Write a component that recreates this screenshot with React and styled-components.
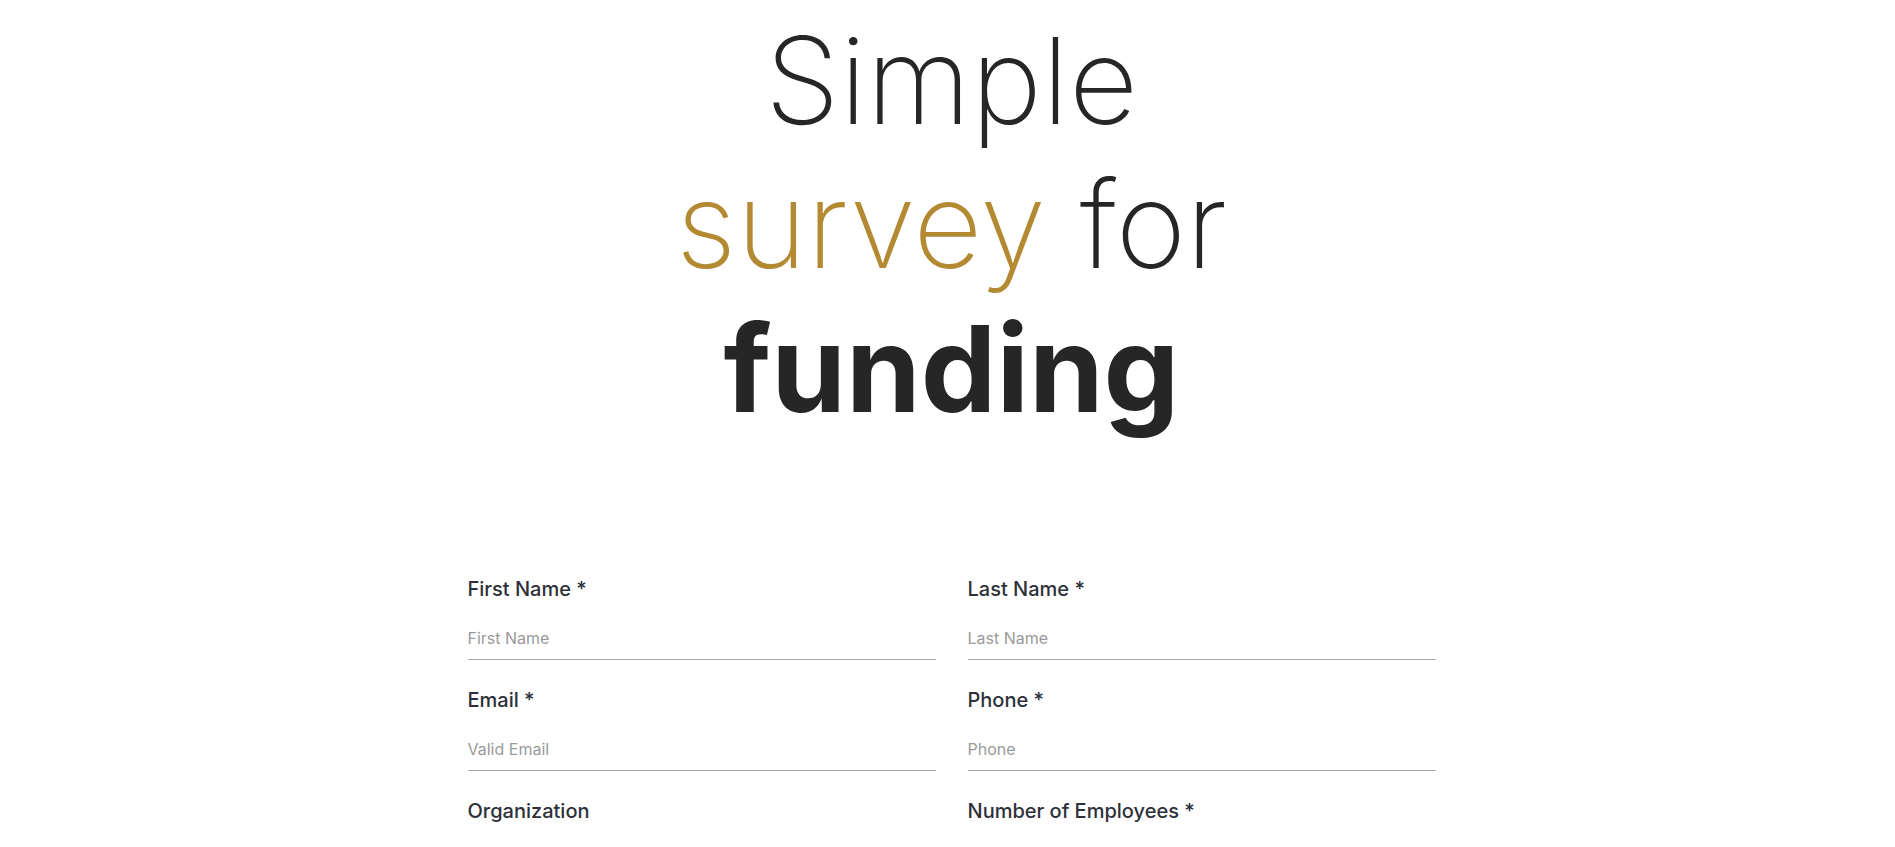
import React from "react";
import styled, { createGlobalStyle } from "styled-components";

const Global = createGlobalStyle`
  html, body { margin: 0; padding: 0; background: #ffffff; }
  body { font-family: Inter, "Noto Sans", sans-serif; }
  * { box-sizing: border-box; }
`;

const Page = styled.main`
  display: flex;
  flex-direction: column;
  align-items: center;
  padding: 9px 0 80px 8px;
`;

const Hero = styled.h1`
  margin: 0;
  width: 100%;
  text-align: center;
  font-family: Inter, sans-serif;
  font-size: 120px;
  line-height: 144px;
  font-weight: 200;
  color: #262626;
  letter-spacing: 0;
`;

const Accent = styled.span`
  color: #b38a32;
`;

const Strong = styled.span`
  font-weight: 700;
`;

const Form = styled.form`
  margin-top: 133px;
  width: 968px;
  display: grid;
  grid-template-columns: 1fr 1fr;
  column-gap: 32px;
  row-gap: 25px;
`;

const Field = styled.div`
  display: flex;
  flex-direction: column;
`;

const Label = styled.label`
  font-family: Inter, sans-serif;
  font-size: 20px;
  line-height: 30px;
  font-weight: 500;
  color: #2d3039;
  margin-bottom: 16px;
`;

const Input = styled.input`
  height: 40px;
  padding: 6px 0 9px;
  border: none;
  border-bottom: 1px solid #a9a9a9;
  outline: none;
  background: transparent;
  font-family: Inter, sans-serif;
  font-size: 16px;
  line-height: 24px;
  color: #262626;
  &::placeholder { color: #9a9a9a; font-weight: 400; }
`;

const fields = [
  ["First Name *", "First Name"],
  ["Last Name *", "Last Name"],
  ["Email *", "Valid Email"],
  ["Phone *", "Phone"],
  ["Organization", "Organization"],
  ["Number of Employees *", "Number of Employees"],
];

export default function App() {
  return (
    <>
      <Global />
      <Page>
        <Hero>
          Simple
          <br />
          <Accent>survey</Accent> for
          <br />
          <Strong>funding</Strong>
        </Hero>
        <Form onSubmit={(e) => e.preventDefault()}>
          {fields.map(([label, ph]) => (
            <Field key={label}>
              <Label>{label}</Label>
              <Input placeholder={ph} />
            </Field>
          ))}
        </Form>
      </Page>
    </>
  );
}
